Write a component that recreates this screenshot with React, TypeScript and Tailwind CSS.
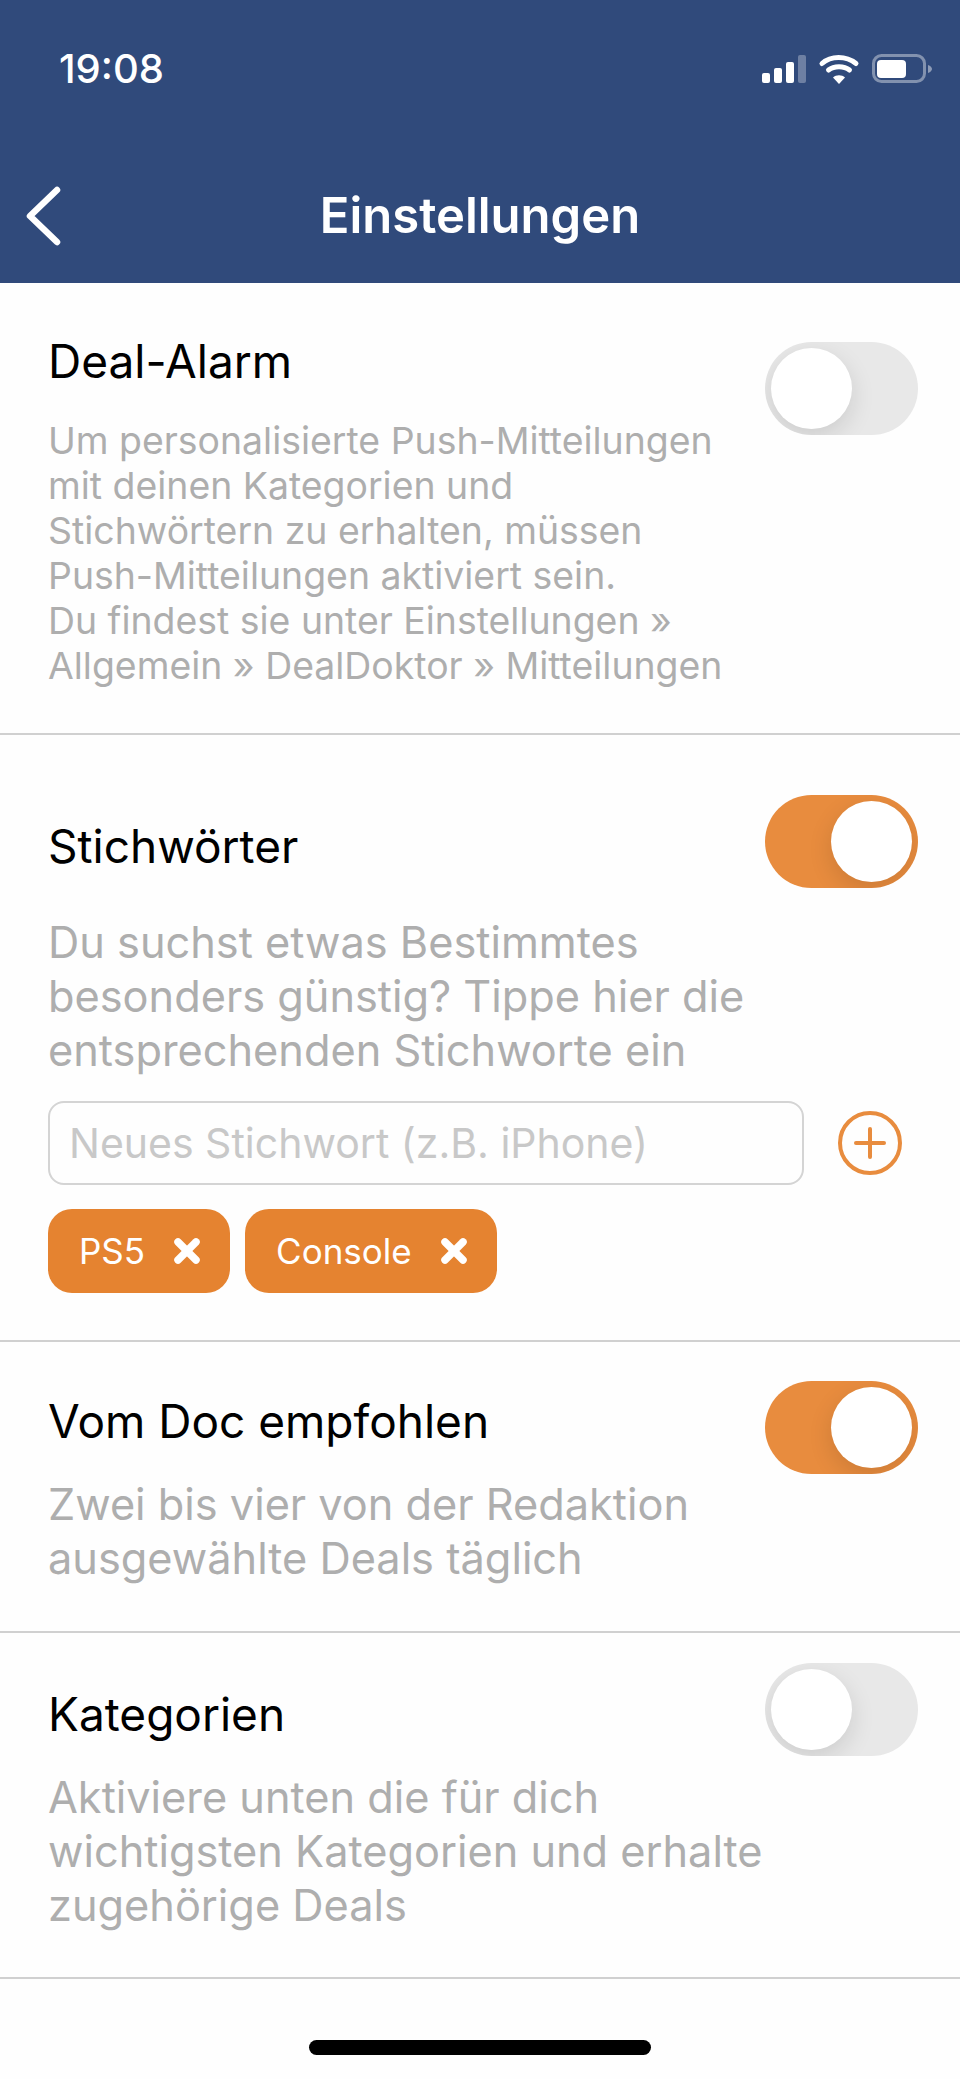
import { X, Plus } from 'lucide-react'

function StatusIcons() {
  return (
    <svg width="170" height="30" viewBox="0 0 170 30" fill="none">
      <rect x="0" y="19" width="8" height="10" rx="2" fill="#fff" />
      <rect x="12" y="14" width="8" height="15" rx="2" fill="#fff" />
      <rect x="24" y="8" width="8" height="21" rx="2" fill="#fff" />
      <rect x="36" y="1" width="8" height="28" rx="2" fill="#fff" fillOpacity="0.3" />
      <path d="M60 9.5C69 1.5 84 1.5 94 9.5" stroke="#fff" strokeWidth="5" strokeLinecap="round" />
      <path d="M66.5 16C72 11.5 82 11.5 87.5 16" stroke="#fff" strokeWidth="5" strokeLinecap="round" />
      <path d="M71 23.5L77 30L83 23.5C80 20.5 74 20.5 71 23.5Z" fill="#fff" />
      <rect x="111.5" y="1.5" width="51" height="26" rx="8" stroke="#fff" strokeOpacity="0.4" strokeWidth="3" />
      <rect x="115" y="6" width="29" height="18" rx="4" fill="#fff" />
      <path d="M166 11C168.5 12 170 13.5 170 15C170 16.5 168.500 18 166 19Z" fill="#fff" fillOpacity="0.45" />
    </svg>
  )
}

function Toggle({ on }: { on: boolean }) {
  return (
    <div
      className={`relative h-[93px] w-[153px] shrink-0 overflow-hidden rounded-full ${on ? 'bg-[#e88c3e]' : 'bg-[#e8e8e8]'}`}
    >
      <div
        className={`absolute top-[6px] h-[81px] w-[81px] rounded-full bg-white shadow-[0_8px_24px_rgba(0,0,0,0.12)] ${on ? 'left-[66px]' : 'left-[6px]'}`}
      />
    </div>
  )
}

function Chip({ label }: { label: string }) {
  return (
    <div className="flex h-[84px] items-center gap-[24px] rounded-[24px] bg-[#e58330] pl-[31px] pr-[25px] text-[35px] text-white">
      <span>{label}</span>
      <X className="h-[36px] w-[36px]" strokeWidth={5} />
    </div>
  )
}

export default function App() {
  return (
    <div className="h-[2079px] w-[960px] overflow-hidden bg-[#fefefe] font-['Inter',sans-serif]">
      {/* Header */}
      <div className="h-[283px] bg-[#304a7b] text-white">
        <div className="flex items-center justify-between pl-[59px] pr-[28px] pt-[54px]">
          <span className="text-[40px] leading-[30px] font-medium">19:08</span>
          <StatusIcons />
        </div>
        <div className="relative mt-[101px] flex h-[62px] items-center justify-center">
          <svg className="absolute left-[24px] top-[0px]" width="40" height="62" viewBox="0 0 40 62" fill="none">
            <path d="M33 5L6 31L33 57" stroke="#fff" strokeWidth="6.5" strokeLinecap="round" strokeLinejoin="round" />
          </svg>
          <h1 className="text-[49px] leading-[62px] font-semibold">Einstellungen</h1>
        </div>
      </div>

      {/* Deal-Alarm */}
      <div className="h-[452px] border-b-2 border-[#d0d0d0] pl-[48px] pr-[42px] pt-[59px]">
        <div className="flex justify-between">
          <h2 className="-mt-px text-[46px] leading-[40px] text-black">Deal-Alarm</h2>
          <Toggle on={false} />
        </div>
        <p className="-mt-[17px] text-[37.4px] leading-[45px] text-[#aeaeae]">
          Um personalisierte Push-Mitteilungen
          <br />
          mit deinen Kategorien und
          <br />
          Stichwörtern zu erhalten, müssen
          <br />
          Push-Mitteilungen aktiviert sein.
          <br />
          Du findest sie unter Einstellungen »
          <br />
          Allgemein » DealDoktor » Mitteilungen
        </p>
      </div>

      {/* Stichwörter */}
      <div className="h-[607px] border-b-2 border-[#d0d0d0] pl-[48px] pr-[42px] pt-[60px]">
        <div className="flex justify-between">
          <h2 className="mt-[31px] text-[46px] leading-[40px] text-black">Stichwörter</h2>
          <Toggle on />
        </div>
        <p className="mt-[27px] text-[43.3px] leading-[54px] text-[#aeaeae]">
          Du suchst etwas Bestimmtes
          <br />
          besonders günstig? Tippe hier die
          <br />
          entsprechenden Stichworte ein
        </p>
        <div className="mt-[24px] flex items-center gap-[34px]">
          <input
            readOnly
            placeholder="Neues Stichwort (z.B. iPhone)"
            className="h-[84px] w-[756px] rounded-[16px] border-2 border-[#d4d4d4] bg-transparent px-[19px] text-[41px] outline-none placeholder:text-[#c8c8c8]"
          />
          <div className="flex h-[64px] w-[64px] items-center justify-center rounded-full border-[4px] border-[#e88c3e] text-[#e88c3e]">
            <Plus className="h-[48px] w-[48px] shrink-0" strokeWidth={2} />
          </div>
        </div>
        <div className="mt-[24px] flex gap-[15px]">
          <Chip label="PS5" />
          <Chip label="Console" />
        </div>
      </div>

      {/* Vom Doc empfohlen */}
      <div className="h-[291px] border-b-2 border-[#d0d0d0] pl-[48px] pr-[42px] pt-[39px]">
        <div className="flex justify-between">
          <h2 className="mt-[12px] text-[46px] leading-[56px] text-black">Vom Doc empfohlen</h2>
          <Toggle on />
        </div>
        <p className="mt-[3px] text-[43.3px] leading-[54px] text-[#aeaeae]">
          Zwei bis vier von der Redaktion
          <br />
          ausgewählte Deals täglich
        </p>
      </div>

      {/* Kategorien */}
      <div className="h-[346px] border-b-2 border-[#d0d0d0] pl-[48px] pr-[42px] pt-[30px]">
        <div className="flex justify-between">
          <h2 className="mt-[23px] text-[46px] leading-[56px] text-black">Kategorien</h2>
          <Toggle on={false} />
        </div>
        <p className="mt-[14px] text-[43.3px] leading-[54px] text-[#aeaeae]">
          Aktiviere unten die für dich
          <br />
          wichtigsten Kategorien und erhalte
          <br />
          zugehörige Deals
        </p>
      </div>

      {/* Home indicator */}
      <div className="mx-auto mt-[61px] h-[15px] w-[342px] rounded-[8px] bg-black" />
    </div>
  )
}
